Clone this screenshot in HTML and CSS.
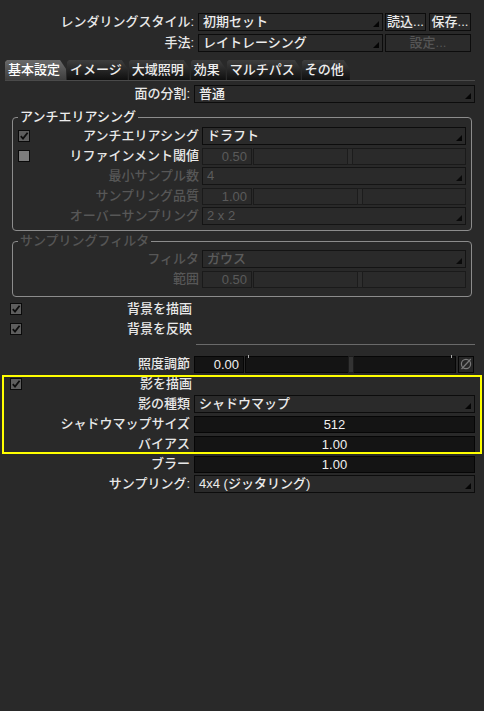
FILE: index.html
```html
<!DOCTYPE html>
<html lang="ja">
<head>
<meta charset="utf-8">
<link rel="stylesheet" href="styles.css">
</head>
<body>
<div class="panel">
  <div class="trow">
    <span class="tlabel">レンダリングスタイル:</span>
    <div class="dd tdd">初期セット</div>
    <div class="btn b1">読込...</div>
    <div class="btn b2">保存...</div>
  </div>
  <div class="trow">
    <span class="tlabel">手法:</span>
    <div class="dd tdd">レイトレーシング</div>
    <div class="btn bwide off">設定...</div>
  </div>

  <div class="tabs">
    <div class="tab on">基本設定</div>
    <div class="tab">イメージ</div>
    <div class="tab">大域照明</div>
    <div class="tab">効果</div>
    <div class="tab">マルチパス</div>
    <div class="tab">その他</div>
  </div>

  <div class="row r-div">
    <span class="lbl">面の分割:</span>
    <div class="dd full">普通</div>
  </div>

  <fieldset class="group g1">
    <legend>アンチエリアシング</legend>
    <div class="grow">
      <span class="glbl"><span class="cb on"><svg viewBox="0 0 10 10"><path d="M1.8 5.2 L4 7.6 L8.6 1.8" stroke="#0d0d0d" stroke-width="1.8" fill="none"/></svg></span><span class="t">アンチエリアシング</span></span>
      <div class="dd gfull">ドラフト</div>
    </div>
    <div class="grow">
      <span class="glbl"><span class="cb"></span><span class="t">リファインメント閾値</span></span>
      <div class="num off">0.50</div>
      <div class="slider off"><span class="thumb" style="left:44%"></span></div>
    </div>
    <div class="grow dim">
      <span class="glbl"><span class="t">最小サンプル数</span></span>
      <div class="dd gfull off">4</div>
    </div>
    <div class="grow dim">
      <span class="glbl"><span class="t">サンプリング品質</span></span>
      <div class="num off">1.00</div>
      <div class="slider off"><span class="thumb" style="left:49%"></span></div>
    </div>
    <div class="grow dim">
      <span class="glbl"><span class="t">オーバーサンプリング</span></span>
      <div class="dd gfull off">2 x 2</div>
    </div>
  </fieldset>

  <fieldset class="group g2">
    <legend class="dim">サンプリングフィルタ</legend>
    <div class="grow dim">
      <span class="glbl"><span class="t">フィルタ</span></span>
      <div class="dd gfull off">ガウス</div>
    </div>
    <div class="grow dim">
      <span class="glbl"><span class="t">範囲</span></span>
      <div class="num off">0.50</div>
      <div class="slider off"><span class="thumb" style="left:49%"></span></div>
    </div>
  </fieldset>

  <div class="crow c-first">
    <span class="cb on"><svg viewBox="0 0 10 10"><path d="M1.8 5.2 L4 7.6 L8.6 1.8" stroke="#0d0d0d" stroke-width="1.8" fill="none"/></svg></span>
    <span class="t">背景を描画</span>
  </div>
  <div class="crow">
    <span class="cb on"><svg viewBox="0 0 10 10"><path d="M1.8 5.2 L4 7.6 L8.6 1.8" stroke="#0d0d0d" stroke-width="1.8" fill="none"/></svg></span>
    <span class="t">背景を反映</span>
  </div>

  <div class="sep"></div>

  <div class="row r-light">
    <span class="lbl">照度調節</span>
    <div class="num right">0.00</div>
    <div class="slider wide"><span class="tick" style="left:1%"></span><span class="tick" style="left:98%"></span><span class="thumb" style="left:49%"></span></div>
    <div class="ibtn"><svg viewBox="0 0 14 14"><circle cx="7" cy="7" r="4.6" stroke="#7a7a7a" stroke-width="1.2" fill="none"/><path d="M2.5 12 L11.8 2" stroke="#7a7a7a" stroke-width="1.2"/></svg></div>
  </div>

  <div class="hl">
    <div class="crow c-shadow">
      <span class="cb on"><svg viewBox="0 0 10 10"><path d="M1.8 5.2 L4 7.6 L8.6 1.8" stroke="#0d0d0d" stroke-width="1.8" fill="none"/></svg></span>
      <span class="t">影を描画</span>
    </div>
    <div class="row">
      <span class="lbl">影の種類</span>
      <div class="dd full">シャドウマップ</div>
    </div>
    <div class="row">
      <span class="lbl">シャドウマップサイズ</span>
      <div class="num full center">512</div>
    </div>
    <div class="row">
      <span class="lbl">バイアス</span>
      <div class="num full center">1.00</div>
    </div>
  </div>
  <div class="row">
    <span class="lbl">ブラー</span>
    <div class="num full center">1.00</div>
  </div>
  <div class="row">
    <span class="lbl">サンプリング:</span>
    <div class="dd full">4x4 (ジッタリング)</div>
  </div>
</div>
</body>
</html>
```

FILE: styles.css
```css
html, body {
  margin: 0;
  padding: 0;
  background: #292929;
}
body {
  width: 484px;
  height: 711px;
  overflow: hidden;
  font-family: "Liberation Sans", "Noto Sans CJK JP", sans-serif;
  font-size: 13px;
  color: #e8e8e8;
  font-weight: 500;
}
.panel {
  padding-top: 13px;
}

/* top rows */
.trow {
  display: flex;
  height: 18px;
  align-items: center;
  margin-bottom: 3px;
}
.tlabel {
  width: 194px;
  flex: none;
  text-align: right;
  line-height: 18px;
}
.tdd {
  margin-left: 4px;
  width: 185px;
}
.btn {
  box-sizing: border-box;
  height: 18px;
  line-height: 16px;
  border: 1px solid #0c0c0c;
  background: #2b2b2b;
  text-align: center;
  color: #ececec;
}
.b1 { width: 41px; margin-left: 2px; }
.b2 { width: 42px; margin-left: 3px; }
.bwide { width: 86px; margin-left: 2px; }
.btn.off { color: #555; }

/* dropdown */
.dd {
  position: relative;
  box-sizing: border-box;
  height: 18px;
  line-height: 16px;
  border: 1px solid #0c0c0c;
  background: #2a2a2a;
  padding-left: 4px;
  color: #ececec;
  flex: none;
  white-space: nowrap;
}
.dd::after {
  content: "";
  position: absolute;
  right: 3px;
  bottom: 3px;
  width: 0;
  height: 0;
  border-left: 6px solid transparent;
  border-bottom: 6px solid #050505;
}
.dd.off {
  color: #5c5c5c;
  border-color: #141414;
}
.dd.off::after { border-bottom-color: #0a0a0a; }

/* tabs */
.tabs {
  display: flex;
  gap: 1px;
  margin: 8px 9px 0 5px;
  height: 20px;
  border-bottom: 1px solid #4a4a4a;
}
.tab {
  height: 20px;
  line-height: 20px;
  padding: 0 6px 0 3px;
  background: linear-gradient(#3e3e3e, #0f0f0f);
  color: #eeeeee;
  clip-path: polygon(0 2px, 2px 0, calc(100% - 6px) 0, 100% 9px, 100% 100%, 0 100%);
}
.tab.on {
  background: linear-gradient(#6a6a6a, #3d3d3d);
  color: #fff;
}

/* main rows */
.row {
  display: flex;
  height: 18px;
  align-items: center;
  margin-top: 2px;
}
.r-div { margin-top: 4px; }
.lbl {
  width: 190px;
  flex: none;
  text-align: right;
  margin-right: 4px;
  line-height: 18px;
  white-space: nowrap;
}
.full { width: 281px; }

/* number fields and sliders */
.num {
  box-sizing: border-box;
  height: 17px;
  line-height: 15px;
  width: 50px;
  flex: none;
  border: 1px solid #060606;
  background: #141414;
  color: #f0f0f0;
  text-align: right;
  padding-right: 4px;
}
.num.full { width: 281px; }
.num.center { text-align: center; padding-right: 0; }
.num.off {
  background: #2a2a2a;
  border-color: #1a1a1a;
  color: #5a5a5a;
}
.slider {
  position: relative;
  box-sizing: border-box;
  height: 17px;
  width: 213px;
  flex: none;
  margin-left: 1px;
  border: 1px solid #060606;
  background: #141414;
}
.slider.off {
  background: #2a2a2a;
  border-color: #1a1a1a;
}
.slider.wide { width: 211px; }
.thumb {
  position: absolute;
  top: -1px;
  bottom: -1px;
  width: 4px;
  background: #333;
  border: 1px solid #1c1c1c;
}
.slider.off .thumb {
  background: #2e2e2e;
  border-color: #1c1c1c;
}
.tick {
  position: absolute;
  top: -2px;
  width: 1px;
  height: 3px;
  background: #aaa;
}
.ibtn {
  box-sizing: border-box;
  width: 16px;
  height: 17px;
  margin-left: 2px;
  border: 1px solid #060606;
  background: #262626;
  display: flex;
  align-items: center;
  justify-content: center;
}
.ibtn svg { width: 14px; height: 14px; }

/* groups */
.group {
  margin: 5px 12px 0 12px;
  padding: 0 5px 3px 5px;
  border: 1px solid #8c8c8c;
  border-radius: 4px;
  min-width: 0;
}
.group legend {
  padding: 0 2px;
  margin-left: 0;
  line-height: 18px;
  color: #ededed;
}
.group legend.dim { color: #555; }
.g2 { margin-top: 1px; padding-bottom: 6px; }
.grow {
  display: flex;
  height: 18px;
  align-items: center;
  margin-bottom: 2px;
}
.g1 .grow:first-of-type { margin-top: 1px; }
.glbl {
  display: flex;
  align-items: center;
  width: 181px;
  flex: none;
  margin-right: 3px;
}
.glbl .t {
  margin-left: auto;
  white-space: nowrap;
  line-height: 18px;
}
.grow.dim .t { color: #575757; }
.gfull { width: 264px; }

/* checkbox */
.cb {
  box-sizing: border-box;
  width: 12px;
  height: 12px;
  flex: none;
  border: 1px solid #0a0a0a;
  background: #7c7c7c;
  display: inline-flex;
}
.cb.on { background: #5e5e5e; }
.cb svg { width: 10px; height: 10px; }
.glbl .cb { margin-left: 0; }

/* checkbox rows */
.crow {
  display: flex;
  align-items: center;
  height: 18px;
  width: 192px;
  padding-left: 10px;
  box-sizing: border-box;
  margin-top: 2px;
}
.c-first { margin-top: 3px; }
.crow .t {
  margin-left: auto;
  line-height: 18px;
}

.sep {
  margin: 6px 9px 0 196px;
  height: 1px;
  background: #6a6a6a;
}
.r-light { margin-top: 10px; }

/* highlight */
.hl {
  position: relative;
}
.hl::before {
  content: "";
  position: absolute;
  left: 2px;
  right: 2px;
  top: 0;
  bottom: -1px;
  border: 2px solid #ffff00;
  pointer-events: none;
}
.c-shadow { margin-top: 2px; }
```
